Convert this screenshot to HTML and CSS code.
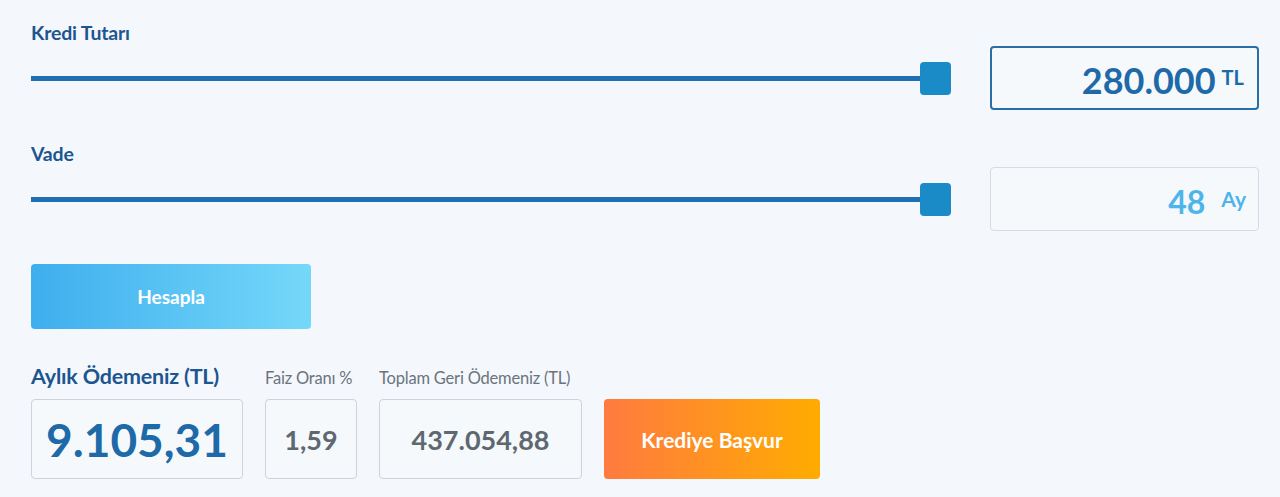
FILE: index.html
```html
<!DOCTYPE html>
<html lang="tr">
<head>
    <meta charset="UTF-8">
    <meta name="viewport" content="width=device-width, initial-scale=1.0">
    <title>Kredi Hesaplama</title>
    <link rel="stylesheet" href="styles.css">
</head>
<body>
    <section class="calc">
        <div class="range-row">
            <div class="range-col">
                <label class="range-label" for="tutar">Kredi Tutarı</label>
                <div class="range-wrap">
                    <input type="range" id="tutar" min="1000" max="280000" value="280000">
                </div>
            </div>
            <div class="value-box active">
                <span class="value">280.000</span>
                <span class="unit unit-tl">TL</span>
            </div>
        </div>

        <div class="range-row">
            <div class="range-col">
                <label class="range-label" for="vade">Vade</label>
                <div class="range-wrap">
                    <input type="range" id="vade" min="3" max="48" value="48">
                </div>
            </div>
            <div class="value-box light">
                <span class="value">48</span>
                <span class="unit unit-ay">Ay</span>
            </div>
        </div>

        <button class="btn-calc">Hesapla</button>

        <div class="results">
            <div class="result">
                <div class="result-label main">Aylık Ödemeniz (TL)</div>
                <div class="result-box monthly">9.105,31</div>
            </div>
            <div class="result">
                <div class="result-label">Faiz Oranı %</div>
                <div class="result-box rate">1,59</div>
            </div>
            <div class="result">
                <div class="result-label">Toplam Geri Ödemeniz (TL)</div>
                <div class="result-box total">437.054,88</div>
            </div>
            <button class="btn-apply">Krediye Başvur</button>
        </div>
    </section>
</body>
</html>
```

FILE: styles.css
```css
body {
    margin: 0;
    background-color: #f4f8fc;
    font-family: Lato, "Open Sans", sans-serif;
}

.calc {
    padding: 22px 21px 0 31px;
}

.range-row {
    display: flex;
    align-items: flex-end;
    gap: 39px;
    margin-bottom: 33px;
}

.range-col {
    flex: 1;
}

.range-label {
    display: block;
    height: 24px;
    font-size: 19.5px;
    line-height: 22px;
    font-weight: 700;
    color: #1d5590;
    letter-spacing: -0.2px;
}

.range-wrap {
    height: 64px;
    display: flex;
    align-items: center;
}

.range-wrap input {
    -webkit-appearance: none;
    appearance: none;
    width: 100%;
    height: 33px;
    margin: 0;
    background: transparent;
}

.range-wrap input::-webkit-slider-runnable-track {
    height: 5px;
    background-color: #1f70b3;
}

.range-wrap input::-webkit-slider-thumb {
    -webkit-appearance: none;
    width: 31px;
    height: 33px;
    margin-top: -14px;
    border-radius: 4px;
    background-color: #1b8bc8;
}

.value-box {
    box-sizing: border-box;
    width: 269px;
    height: 64px;
    border-radius: 4px;
    display: flex;
    align-items: center;
    justify-content: flex-end;
    padding-right: 13px;
    background-color: #f6f9fc;
}

.value-box.active {
    border: 2px solid #2a6ea8;
    color: #1e6aa8;
}

.value-box.light {
    border: 1px solid #d5dce2;
    color: #4db5ea;
    padding-right: 12px;
}

.value {
    font-weight: 700;
}

.active .value {
    font-size: 36px;
    margin-right: 6px;
    margin-top: 4px;
}

.light .value {
    font-size: 32px;
    margin-right: 16px;
    margin-top: 4px;
}

.unit {
    font-weight: 700;
}

.unit-tl {
    font-size: 20px;
    margin-bottom: 2px;
}

.unit-ay {
    font-size: 21px;
    margin-bottom: 2px;
}

.btn-calc {
    display: block;
    width: 280px;
    height: 65px;
    border: none;
    border-radius: 4px;
    background: linear-gradient(to right, #3eaeee, #75d8f9);
    color: #fff;
    font-family: inherit;
    font-size: 19px;
    font-weight: 700;
    cursor: pointer;
}

.results {
    display: flex;
    align-items: flex-end;
    gap: 22px;
    margin-top: 34px;
}

.result-label {
    font-size: 16.5px;
    color: #6b747c;
    margin-bottom: 11px;
    white-space: nowrap;
    letter-spacing: -0.2px;
}

.result-label.main {
    font-size: 21.5px;
    font-weight: 700;
    color: #1d5590;
    margin-bottom: 10px;
}

.result-box {
    box-sizing: border-box;
    height: 80px;
    border: 1px solid #cdd3d9;
    border-radius: 4px;
    display: flex;
    align-items: center;
    justify-content: center;
    font-weight: 700;
    color: #5e6871;
    background-color: #f6f9fc;
}

.result-box.monthly {
    width: 212px;
    font-size: 46px;
    color: #1e6aa8;
}

.result-box.rate {
    width: 92px;
    font-size: 27px;
}

.result-box.total {
    width: 203px;
    font-size: 27px;
}

.btn-apply {
    width: 216px;
    height: 80px;
    border: none;
    border-radius: 4px;
    background: linear-gradient(to right, #ff7a40, #ffac00);
    color: #fff;
    font-family: inherit;
    font-size: 21px;
    font-weight: 700;
    cursor: pointer;
}
```
